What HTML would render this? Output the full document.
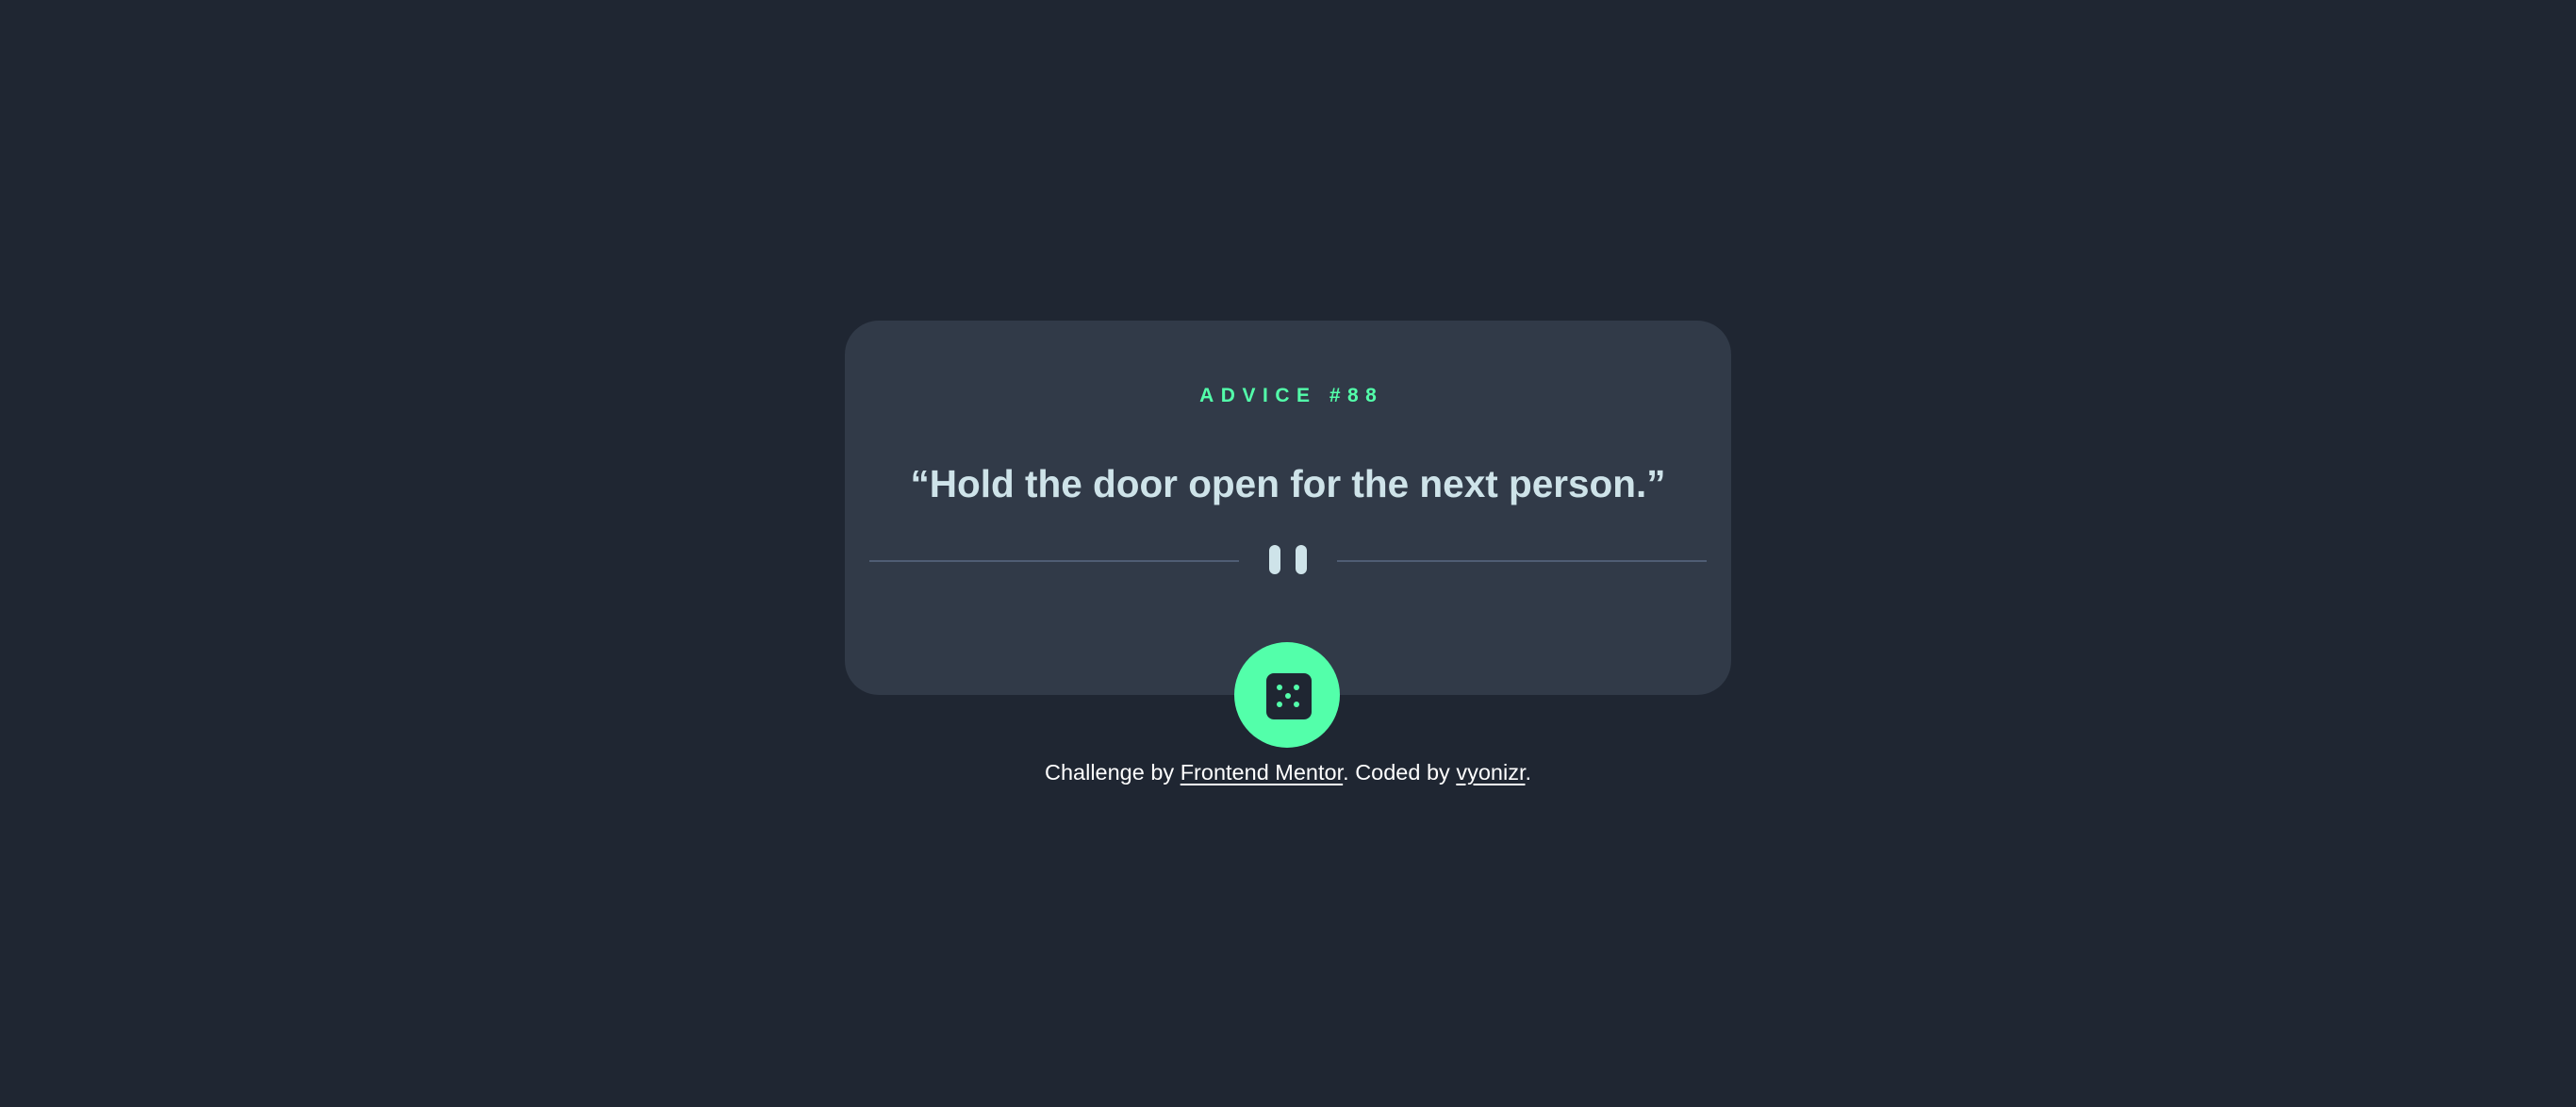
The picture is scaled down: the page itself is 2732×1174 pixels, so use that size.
<!DOCTYPE html>
<html><head><meta charset="utf-8"><style>
html,body{margin:0;width:2732px;height:1174px;background:#1f2632;overflow:hidden;font-family:"Liberation Sans",sans-serif}
.card{position:absolute;left:896px;top:340px;width:940px;height:397px;background:#313a48;border-radius:36px}
.adv{position:absolute;top:408px;left:0;width:2732px;text-align:center;color:#53ffaa;font-weight:bold;font-size:21px;letter-spacing:7.5px;text-indent:7.5px}
.q{position:absolute;top:490px;left:0;width:2732px;text-align:center;color:#cee3e9;font-weight:bold;font-size:40.5px;letter-spacing:0}
.line{position:absolute;top:594px;height:2px;background:#4f5d74}
.bar{position:absolute;top:578px;width:12px;height:31px;border-radius:6px;background:#cee3e9}
.btn{position:absolute;left:1309px;top:681px;width:112px;height:112px;border-radius:50%;background:#53ffaa}
.foot{position:absolute;top:806px;left:0;width:2732px;text-align:center;color:#fff;font-size:23.5px}
.foot span{text-decoration:underline;text-underline-offset:4px}
</style></head><body>
<div class="card"></div>
<div class="adv">ADVICE #88</div>
<div class="q">“Hold the door open for the next person.”</div>
<div class="line" style="left:922px;width:392px"></div>
<div class="line" style="left:1418px;width:392px"></div>
<div class="bar" style="left:1346px"></div>
<div class="bar" style="left:1374px"></div>
<div class="btn"></div>
<svg style="position:absolute;left:1343px;top:714px" width="48" height="49" viewBox="0 0 48 49">
<rect width="48" height="49" rx="8" fill="#1f2632"/>
<g fill="#53ffaa"><circle cx="14" cy="15" r="3"/><circle cx="32" cy="15" r="3"/><circle cx="23" cy="24" r="3"/><circle cx="14" cy="33" r="3"/><circle cx="32" cy="33" r="3"/></g>
</svg>
<div class="foot">Challenge by <span>Frontend Mentor</span>. Coded by <span>vyonizr</span>.</div>
</body></html>
